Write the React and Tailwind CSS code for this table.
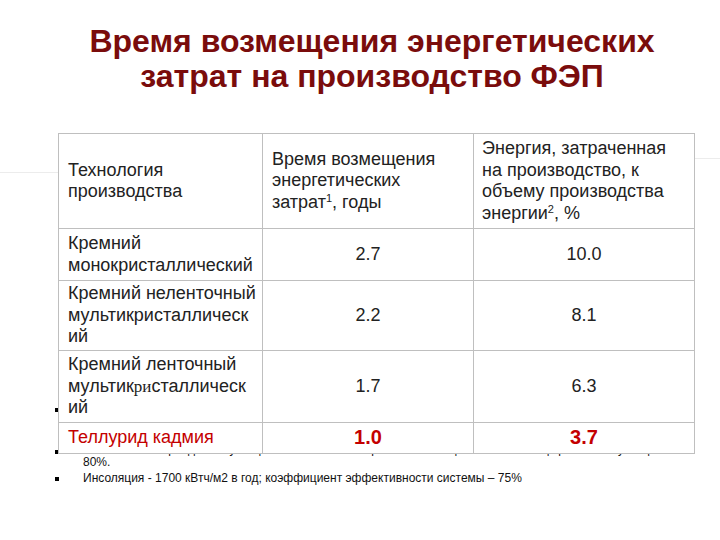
import React from "react";

const App = () => {
  return (
    <div className="relative w-[720px] h-[540px] bg-white overflow-hidden font-['Liberation_Sans',Arial,sans-serif] text-[#222]">
      {/* faint template lines behind the table */}
      <div className="absolute left-0 top-[172px] w-[58px] h-px bg-[#ececec]" />
      <div className="absolute left-[695px] top-[158px] w-[25px] h-px bg-[#ececec]" />

      {/* Title */}
      <h1 className="pt-[24px] pl-[24px] text-center text-[32px] leading-[35px] font-bold text-[#7a0c0c]">
        Время возмещения энергетических
        <br />
        затрат на производство ФЭП
      </h1>

      {/* Table start */}
      <table className="relative z-10 mt-[39px] ml-[58px] w-[636px] table-fixed border-collapse bg-white text-[18px] leading-[21.5px]">
        <colgroup>
          <col className="w-[204px]" />
          <col className="w-[211px]" />
          <col className="w-[221px]" />
        </colgroup>
        <thead>
          <tr className="h-[95px]">
            <th className="border border-[#bfbfbf] pl-[9px] text-left font-normal align-middle">
              Технология
              <br />
              производства
            </th>
            <th className="border border-[#bfbfbf] pl-[9px] text-left font-normal align-middle">
              Время возмещения
              <br />
              энергетических
              <br />
              затрат<sup className="text-[11px]">1</sup>, годы
            </th>
            <th className="border border-[#bfbfbf] pl-[8px] text-left font-normal align-middle">
              Энергия, затраченная
              <br />
              на производство, к
              <br />
              объему производства
              <br />
              энергии<sup className="text-[11px]">2</sup>, %
            </th>
          </tr>
        </thead>
        <tbody>
          <tr className="h-[52px]">
            <td className="border border-[#bfbfbf] pl-[9px]">
              Кремний
              <br />
              монокристаллический
            </td>
            <td className="border border-[#bfbfbf] text-center">2.7</td>
            <td className="border border-[#bfbfbf] text-center">10.0</td>
          </tr>
          <tr className="h-[70px]">
            <td className="border border-[#bfbfbf] pl-[9px]">
              Кремний неленточный
              <br />
              мультикристаллическ
              <br />
              ий
            </td>
            <td className="border border-[#bfbfbf] text-center">2.2</td>
            <td className="border border-[#bfbfbf] text-center">8.1</td>
          </tr>
          <tr className="h-[72px]">
            <td className="border border-[#bfbfbf] pl-[9px]">
              Кремний ленточный
              <br />
              мультик<span className="font-['Liberation_Serif',serif] text-[17px]">ри</span>сталлическ
              <br />
              ий
            </td>
            <td className="border border-[#bfbfbf] text-center">1.7</td>
            <td className="border border-[#bfbfbf] text-center">6.3</td>
          </tr>
          <tr className="h-[31px] text-[#c40000]">
            <td className="border border-[#bfbfbf] pl-[9px]">Теллурид кадмия</td>
            <td className="border border-[#bfbfbf] text-center text-[20px] font-bold">1.0</td>
            <td className="border border-[#bfbfbf] text-center text-[20px] font-bold">3.7</td>
          </tr>
        </tbody>
      </table>
      {/* Table end */}

      {/* Footnotes, partly under the table */}
      <ul className="relative -mt-[53px] ml-[55px] flex flex-col gap-[3px] text-[12px] leading-[13px] text-[#111]">
        <li className="flex">
          <span className="mt-[7px] w-[4px] h-[4px] bg-black shrink-0" />
          <span className="ml-[24px]">
            1. Срок службы системы 30 лет, энергия на производство
            <br />
            рассчитана по данным производителей
            <br />
            &nbsp;
          </span>
        </li>
        <li className="flex">
          <span className="mt-[7px] w-[4px] h-[4px] bg-black shrink-0" />
          <span className="ml-[24px]">
            2. 30 летний период эксплуатации с максимальной расчетной мощностью на конец срока эксплуатации
            <br />
            80%.
          </span>
        </li>
        <li className="flex">
          <span className="mt-[5px] w-[4px] h-[4px] bg-black shrink-0" />
          <span className="ml-[24px]">
            Инсоляция - 1700 кВтч/м2 в год; коэффициент эффективности системы – 75%
          </span>
        </li>
      </ul>
    </div>
  );
};

export default App;
